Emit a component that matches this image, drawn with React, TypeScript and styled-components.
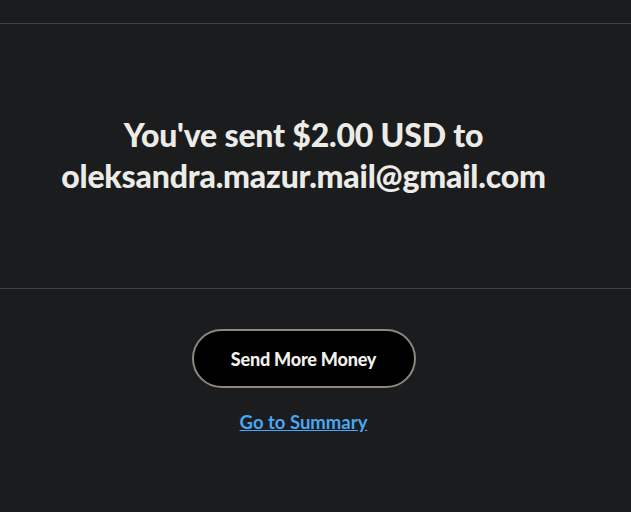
import React from "react";
import styled, { createGlobalStyle } from "styled-components";

const GlobalStyle = createGlobalStyle`
  html, body {
    margin: 0;
    padding: 0;
    background: #1b1c1e;
  }
  body {
    font-family: Lato, "Noto Sans", sans-serif;
  }
`;

const Page = styled.div`
  width: 631px;
  height: 512px;
  background: #1b1c1e;
  overflow: hidden;
`;

const Divider = styled.div`
  height: 1px;
  background: #3f4042;
`;

const Section = styled.section<{ pad?: string }>`
  display: flex;
  flex-direction: column;
  align-items: center;
  padding: ${(p) => p.pad || "0"};
  padding-right: 24px;
`;

const Title = styled.h1`
  margin: 0;
  font-family: Lato, sans-serif;
  font-weight: 900;
  font-size: 32px;
  line-height: 41px;
  color: #ecebe6;
  text-align: center;
  letter-spacing: -0.2px;
`;

const PillButton = styled.button`
  width: 224px;
  height: 59px;
  border-radius: 30px;
  background: #000;
  border: 2px solid #8d877d;
  color: #f1f0ec;
  font-family: Lato, sans-serif;
  font-weight: 900;
  font-size: 18px;
  letter-spacing: -0.2px;
  cursor: pointer;
`;

const SummaryLink = styled.a`
  margin-top: 23px;
  color: #49a6f2;
  font-family: Lato, sans-serif;
  font-weight: 700;
  font-size: 18.5px;
  text-decoration: underline;
  cursor: pointer;
`;

export default function App() {
  return (
    <Page>
      <GlobalStyle />
      <div style={{ height: 23 }} />
      <Divider />
      <Section pad="90px 0 92px">
        <Title>
          You've sent $2.00 USD to
          <br />
          oleksandra.mazur.mail@gmail.com
        </Title>
      </Section>
      <Divider />
      <Section pad="40px 0 0">
        <PillButton>Send More Money</PillButton>
        <SummaryLink>Go to Summary</SummaryLink>
      </Section>
    </Page>
  );
}
